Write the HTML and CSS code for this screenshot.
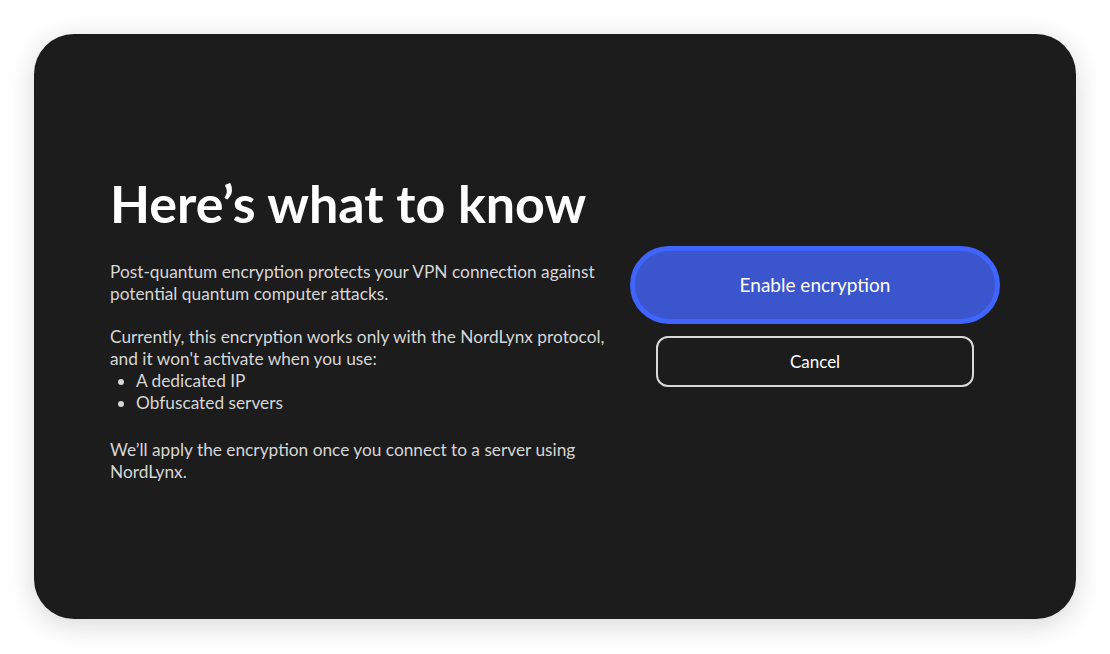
FILE: index.html
```html
<!DOCTYPE html>
<html>
<head>
<meta charset="utf-8">
<link rel="stylesheet" href="styles.css">
</head>
<body>
<div class="card">
  <div class="info">
    <h1 class="title">Here’s what to know</h1>
    <p class="para">Post-quantum encryption protects your VPN connection against potential quantum computer attacks.</p>
    <p class="para">Currently, this encryption works only with the NordLynx protocol, and it won't activate when you use:</p>
    <ul class="list">
      <li>A dedicated IP</li>
      <li>Obfuscated servers</li>
    </ul>
    <p class="para last">We’ll apply the encryption once you connect to a server using NordLynx.</p>
  </div>
  <div class="actions">
    <button class="btn primary">Enable encryption</button>
    <button class="btn secondary">Cancel</button>
  </div>
</div>
</body>
</html>
```
FILE: styles.css
```css
html, body {
  margin: 0;
  padding: 0;
  background: #ffffff;
  font-family: Lato, "Open Sans", sans-serif;
}
body {
  padding: 34px;
  width: 1042px;
}
.card {
  box-sizing: border-box;
  width: 1042px;
  height: 585px;
  background: #1c1c1c;
  border-radius: 40px;
  box-shadow: 0 6px 28px rgba(0, 0, 0, 0.16);
  display: flex;
  align-items: center;
  padding: 0 76px;
  gap: 20px;
}
.info {
  width: 500px;
  color: #d6d6d6;
  font-size: 17.3px;
  line-height: 22px;
  padding-top: 3px;
}
.title {
  margin: 0 0 28px 0;
  color: #ffffff;
  font-size: 52px;
  line-height: 60px;
  font-weight: 700;
}
.para {
  margin: 0 0 21px 0;
}
.list {
  margin: -21px 0 25px 0;
  padding-left: 26px;
}
.last {
  margin-bottom: 0;
}
.actions {
  width: 370px;
  display: flex;
  flex-direction: column;
  align-items: center;
  gap: 12px;
  margin-top: -20px;
}
.btn {
  font-family: Lato, "Open Sans", sans-serif;
  color: #ffffff;
  cursor: pointer;
}
.primary {
  box-sizing: border-box;
  width: 370px;
  height: 78px;
  border-radius: 39px;
  border: 5px solid #3f64ff;
  background: #3b55cc;
  font-size: 19px;
  padding-bottom: 2px;
}
.secondary {
  box-sizing: border-box;
  width: 318px;
  height: 51px;
  border-radius: 12px;
  border: 2px solid #d9d9d9;
  background: transparent;
  font-size: 17px;
}
```
